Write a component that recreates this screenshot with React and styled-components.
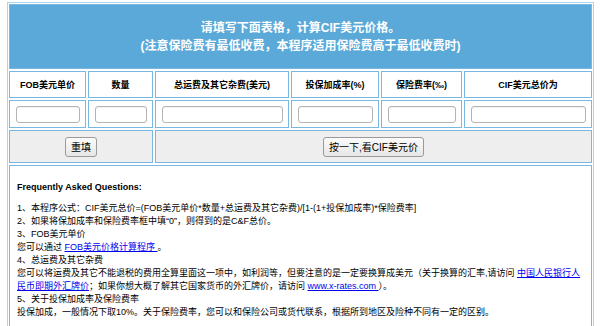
import React from 'react';
import styled, { createGlobalStyle } from 'styled-components';

const GlobalStyle = createGlobalStyle`
  html, body {
    margin: 0;
    padding: 0;
    overflow: hidden;
    background: #ffffff;
  }
  body {
    font-family: "Liberation Sans", "Noto Sans CJK SC", sans-serif;
    color: #000000;
  }
`;

const Frame = styled.div`
  display: grid;
  grid-template-columns: 77px 65px 134px 88px 81px 128px;
  grid-template-rows: 65px 27px 28px 33px auto;
  gap: 2px;
  padding: 1px;
  margin: 2px 0 0 7px;
  width: fit-content;
  border: 1px solid #a9d4ef;
`;

const Cell = styled.div`
  grid-column: span ${(p) => p.$span || 1};
  border: 1px solid #78b8e2;
  background: ${(p) => p.$bg || '#ffffff'};
  display: flex;
  align-items: center;
  justify-content: center;
  box-sizing: border-box;
  min-width: 0;
`;

const Banner = styled(Cell)`
  background: #5aa9d8;
  flex-direction: column;
  color: #ffffff;
  font-weight: bold;
  font-size: 12px;
  line-height: 18px;
  text-align: center;
`;

const Label = styled(Cell)`
  font-size: 9px;
  font-weight: bold;
  text-align: center;
`;

const Field = styled.input`
  width: calc(100% - 11px);
  height: 17px;
  box-sizing: border-box;
  border: 1px solid #b4b4b4;
  border-radius: 3px;
  background: #ffffff;
  padding: 0 3px;
  font-size: 10px;
  box-shadow: inset 0 1px 1px rgba(0, 0, 0, 0.06);
`;

const Button = styled.button`
  height: 20px;
  padding: 0 5px;
  font-family: "Liberation Sans", "Noto Sans CJK SC", sans-serif;
  font-size: 10px;
  color: #000000;
  background: linear-gradient(#fbfbfb, #e6e6e6);
  border: 1px solid #9a9a9a;
  border-radius: 3px;
  cursor: pointer;
`;

const Faq = styled(Cell)`
  display: block;
  padding: 15px 7px 40px 7px;
  font-size: 9px;
  line-height: 13px;
`;

const FaqTitle = styled.div`
  font-weight: bold;
  margin-bottom: 8px;
`;

const Line = styled.div``;

const Link = styled.a`
  color: #0000ee;
  text-decoration: underline;
`;

const labels = [
  'FOB美元单价',
  '数量',
  '总运费及其它杂费(美元)',
  '投保加成率(%)',
  '保险费率(‰)',
  'CIF美元总价为',
];

function App() {
  return (
    <>
      <GlobalStyle />
      <Frame>
        <Banner $span={6}>
          <div>请填写下面表格，计算CIF美元价格。</div>
          <div>(注意保险费有最低收费，本程序适用保险费高于最低收费时)</div>
        </Banner>

        {labels.map((l) => (
          <Label key={l}>{l}</Label>
        ))}

        {labels.map((l) => (
          <Cell key={l}>
            <Field type="text" />
          </Cell>
        ))}

        <Cell $span={2} $bg="#eeeeee">
          <Button type="reset">重填</Button>
        </Cell>
        <Cell $span={4} $bg="#eeeeee">
          <Button type="button">按一下,看CIF美元价</Button>
        </Cell>

        <Faq $span={6}>
          <FaqTitle>Frequently Asked Questions:</FaqTitle>
          <Line>1、本程序公式：CIF美元总价=(FOB美元单价*数量+总运费及其它杂费)/[1-(1+投保加成率)*保险费率]</Line>
          <Line>2、如果将保加成率和保险费率框中填“0”，则得到的是C&amp;F总价。</Line>
          <Line>3、FOB美元单价</Line>
          <Line>
            您可以通过 <Link href="#">FOB美元价格计算程序 </Link>。
          </Line>
          <Line>4、总运费及其它杂费</Line>
          <Line>
            您可以将运费及其它不能退税的费用全算里面这一项中，如利润等，但要注意的是一定要换算成美元（关于换算的汇率,请访问{' '}
            <Link href="#">中国人民银行人民币即期外汇牌价</Link>；如果你想大概了解其它国家货币的外汇牌价，请访问{' '}
            <Link href="#">www.x-rates.com </Link>）。
          </Line>
          <Line>5、关于投保加成率及保险费率</Line>
          <Line>投保加成，一般情况下取10%。关于保险费率，您可以和保险公司或货代联系，根据所到地区及险种不同有一定的区别。</Line>
        </Faq>
      </Frame>
    </>
  );
}

export default App;
